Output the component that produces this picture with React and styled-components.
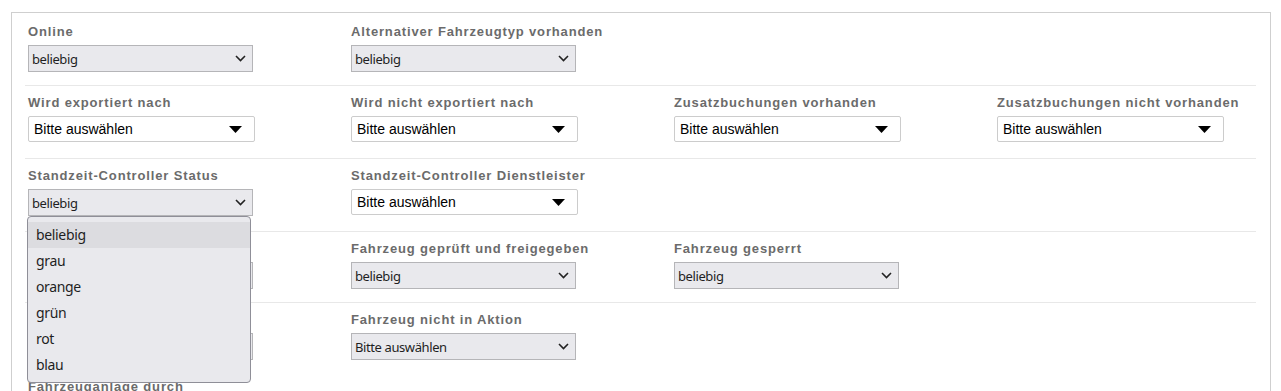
import React from "react";
import styled, { createGlobalStyle } from "styled-components";

const GlobalStyle = createGlobalStyle`
  body {
    margin: 0;
    background: #fff;
    font-family: "Liberation Sans", Arial, sans-serif;
  }
`;

const Panel = styled.div`
  margin: 12px 10px 0 11px;
  border: 1px solid #cfcfcf;
  border-bottom: none;
  padding: 0 14px 0 13px;
  height: 400px;
`;

const Row = styled.div`
  display: grid;
  grid-template-columns: repeat(4, 323px);
  padding: ${(p) => p.pt}px 3px ${(p) => p.pb}px;
  border-bottom: ${(p) => (p.last ? "none" : "1px solid #e8e8e8")};
`;

const Field = styled.div`
  position: relative;
  display: flex;
  flex-direction: column;
  gap: 5px;
`;

const Label = styled.div`
  font-family: "Liberation Sans", Arial, sans-serif;
  font-weight: bold;
  font-size: 13px;
  line-height: 16px;
  letter-spacing: 0.85px;
  color: #6b6b6b;
  white-space: nowrap;
`;

const Select = styled.div`
  box-sizing: border-box;
  width: ${(p) => (p.plain ? "227px" : "225px")};
  height: ${(p) => (p.plain ? "26px" : "27px")};
  margin-bottom: ${(p) => (p.plain ? "1px" : "0")};
  display: flex;
  align-items: center;
  justify-content: space-between;
  padding: ${(p) => (p.plain ? "0 12px 0 5px" : "0 6px 0 3px")};
  background: ${(p) => (p.plain ? "#fff" : "#e9e9ed")};
  border: 1px solid ${(p) => (p.plain ? "#cccccc" : "#b5b5b8")};
  border-radius: ${(p) => (p.plain ? "2px" : "0")};
  color: ${(p) => (p.plain ? "#000" : "#1f1f1f")};
  font-family: ${(p) =>
    p.plain
      ? '"Liberation Sans", Arial, sans-serif'
      : '"Noto Sans", "Open Sans", sans-serif'};
  font-size: ${(p) => (p.plain ? "14px" : "13px")};
  letter-spacing: ${(p) => (p.plain ? "0" : "-0.4px")};
`;

const Menu = styled.div`
  position: absolute;
  top: 48px;
  left: -1px;
  width: 224px;
  box-sizing: border-box;
  padding: 5px 0 4px;
  background: #e9e9ed;
  border: 1px solid #8f8f98;
  border-radius: 4px;
  z-index: 5;
`;

const MenuItem = styled.div`
  height: 26px;
  line-height: 26px;
  padding-left: 8px;
  font-family: "Noto Sans", "Open Sans", sans-serif;
  font-size: 14px;
  letter-spacing: -0.35px;
  color: #1f1f1f;
  background: ${(p) => (p.active ? "#dcdce0" : "transparent")};
`;

const Chevron = () => (
  <svg width="11" height="7" viewBox="0 0 11 7">
    <path d="M1 1 L5.5 5.5 L10 1" fill="none" stroke="#222" strokeWidth="1.6" />
  </svg>
);

const Caret = () => (
  <svg width="13" height="7" viewBox="0 0 13 7">
    <path d="M0 0 H13 L6.5 7 Z" fill="#000" />
  </svg>
);

const rows = [
  {
    pt: 11,
    pb: 13,
    fields: [
      { label: "Online", value: "beliebig" },
      { label: "Alternativer Fahrzeugtyp vorhanden", value: "beliebig" },
    ],
  },
  {
    pt: 9,
    pb: 15,
    fields: [
      { label: "Wird exportiert nach", value: "Bitte auswählen", plain: true },
      { label: "Wird nicht exportiert nach", value: "Bitte auswählen", plain: true },
      { label: "Zusatzbuchungen vorhanden", value: "Bitte auswählen", plain: true },
      { label: "Zusatzbuchungen nicht vorhanden", value: "Bitte auswählen", plain: true },
    ],
  },
  {
    pt: 9,
    pb: 15,
    fields: [
      { label: "Standzeit-Controller Status", value: "beliebig", open: true },
      { label: "Standzeit-Controller Dienstleister", value: "Bitte auswählen", plain: true },
    ],
  },
  {
    pt: 9,
    pb: 13,
    fields: [
      { label: "Fahrzeug verfügbar", value: "beliebig" },
      { label: "Fahrzeug geprüft und freigegeben", value: "beliebig" },
      { label: "Fahrzeug gesperrt", value: "beliebig" },
    ],
  },
  {
    pt: 9,
    pb: 10,
    last: true,
    fields: [
      { label: "Fahrzeug in Aktion", value: "beliebig" },
      { label: "Fahrzeug nicht in Aktion", value: "Bitte auswählen" },
    ],
  },
  {
    pt: 9,
    pb: 15,
    last: true,
    fields: [{ label: "Fahrzeuganlage durch", value: "Bitte auswählen", plain: true }],
  },
];

const options = ["beliebig", "grau", "orange", "grün", "rot", "blau"];

export default function App() {
  return (
    <>
      <GlobalStyle />
      <Panel>
        {rows.map((row, i) => (
          <Row key={i} pt={row.pt} pb={row.pb} last={row.last}>
            {row.fields.map((f) => (
              <Field key={f.label}>
                <Label>{f.label}</Label>
                <Select plain={f.plain}>
                  <span>{f.value}</span>
                  {f.plain ? <Caret /> : <Chevron />}
                </Select>
                {f.open && (
                  <Menu>
                    {options.map((o, k) => (
                      <MenuItem key={o} active={k === 0}>
                        {o}
                      </MenuItem>
                    ))}
                  </Menu>
                )}
              </Field>
            ))}
          </Row>
        ))}
      </Panel>
    </>
  );
}
